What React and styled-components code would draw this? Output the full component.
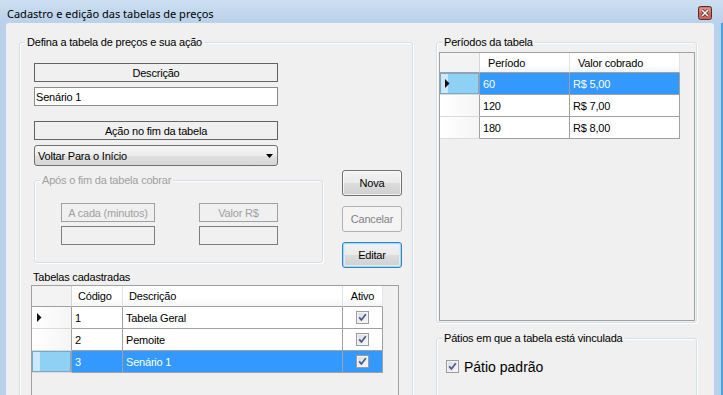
import React from 'react'
import styled, { createGlobalStyle, css } from 'styled-components'

const GlobalStyle = createGlobalStyle`
  html, body {
    margin: 0;
    padding: 0;
    background: #b9d1ea;
  }
  body {
    font-family: 'Liberation Sans', Arial, sans-serif;
    font-size: 11px;
    letter-spacing: -0.2px;
    color: #000;
  }
`

const tabelas = [
  { codigo: '1', descricao: 'Tabela Geral', ativo: true },
  { codigo: '2', descricao: 'Pemoite', ativo: true },
  { codigo: '3', descricao: 'Senário 1', ativo: true },
]

const tabelaCols = [
  { key: 'codigo', label: 'Código', width: 51, headPad: 6 },
  { key: 'descricao', label: 'Descrição', width: 220, headPad: 6 },
  { key: 'ativo', label: 'Ativo', width: 40, center: true, check: true },
]

const periodos = [
  { periodo: '60', valor: 'R$ 5,00' },
  { periodo: '120', valor: 'R$ 7,00' },
  { periodo: '180', valor: 'R$ 8,00' },
]

const periodoCols = [
  { key: 'periodo', label: 'Período', width: 90, headPad: 8 },
  { key: 'valor', label: 'Valor cobrado', width: 110, headPad: 8 },
]

const CheckGlyph = () => (
  <svg width="13" height="13" viewBox="0 0 13 13">
    <defs>
      <linearGradient id="chk" x1="0" y1="0" x2="1" y2="1">
        <stop offset="0" stopColor="#dcdee2" />
        <stop offset="1" stopColor="#f6f6f6" />
      </linearGradient>
    </defs>
    <rect x="0.5" y="0.5" width="12" height="12" fill="#f4f4f4" stroke="#9a9c9f" />
    <rect x="2" y="2" width="9" height="9" fill="url(#chk)" />
    <path d="M3.2 6.4 L5.4 8.9 L9.8 3.2" stroke="#46598f" strokeWidth="1.7" fill="none" />
  </svg>
)

const RowArrow = () => (
  <svg width="5" height="9" viewBox="0 0 5 9">
    <path d="M0 0 L4.5 4.5 L0 9 Z" fill="#111" />
  </svg>
)

const CloseGlyph = () => (
  <svg width="14" height="14" viewBox="0 0 14 14">
    <rect x="0.5" y="0.5" width="13" height="13" rx="2" fill="#c9675c" stroke="#5c2a25" />
    <rect x="1.5" y="1.5" width="11" height="5" rx="1" fill="#dd8d84" />
    <path d="M4 4 L10 10 M10 4 L4 10" stroke="#4a1f1a" strokeWidth="3" />
    <path d="M4 4 L10 10 M10 4 L4 10" stroke="#fff" strokeWidth="1.6" />
  </svg>
)

const DropArrow = () => (
  <svg width="7" height="4" viewBox="0 0 7 4">
    <path d="M0 0 L7 0 L3.5 4 Z" fill="#000" />
  </svg>
)

function DataGrid({ columns, rows, currentRow, selectedRow, headHeight, height }) {
  const template = '40px ' + columns.map(c => c.width + 'px').join(' ')
  return (
    <GridFrame $height={height}>
      <GridRow $cols={template} $h={headHeight}>
        <CornerCell />
        {columns.map(c => (
          <HeadCell key={c.key} $pad={c.headPad} $center={c.center}>
            {c.label}
          </HeadCell>
        ))}
      </GridRow>
      {rows.map((row, i) => (
        <GridRow key={i} $cols={template} $h={22}>
          <RowHead $selected={i === selectedRow}>{i === currentRow && <RowArrow />}</RowHead>
          {columns.map(c => (
            <Cell key={c.key} $selected={i === selectedRow} $center={c.center}>
              {c.check ? <CheckGlyph /> : row[c.key]}
            </Cell>
          ))}
        </GridRow>
      ))}
    </GridFrame>
  )
}

export default function App() {
  return (
    <>
      <GlobalStyle />
      <Window>
        <TitleBar>
          <Title>Cadastro e edição das tabelas de preços</Title>
          <CloseBox>
            <CloseGlyph />
          </CloseBox>
        </TitleBar>
        <Frame>
          <Client>
            <MainGroup>
              <Legend>Defina a tabela de preços e sua ação</Legend>
              <TopRow>
                <FormColumn>
                  <LabelBox $width={244}>Descrição</LabelBox>
                  <TextBox defaultValue="Senário 1" />
                  <LabelBox $width={244} $gap={15}>
                    Ação no fim da tabela
                  </LabelBox>
                  <ComboBox>
                    <span>Voltar Para o Início</span>
                    <DropArrow />
                  </ComboBox>
                  <AfterGroup>
                    <Legend $disabled>Após o fim da tabela cobrar</Legend>
                    <AfterField>
                      <LabelBox $width={94} $disabled>
                        A cada (minutos)
                      </LabelBox>
                      <SmallInput $width={94} disabled />
                    </AfterField>
                    <AfterField>
                      <LabelBox $width={79} $disabled>
                        Valor R$
                      </LabelBox>
                      <SmallInput $width={79} disabled />
                    </AfterField>
                  </AfterGroup>
                </FormColumn>
                <ButtonColumn>
                  <Button>Nova</Button>
                  <Button disabled>Cancelar</Button>
                  <Button $focused>Editar</Button>
                </ButtonColumn>
              </TopRow>
              <SectionLabel>Tabelas cadastradas</SectionLabel>
              <DataGrid
                columns={tabelaCols}
                rows={tabelas}
                currentRow={0}
                selectedRow={2}
                headHeight={21}
                height={130}
              />
            </MainGroup>
            <RightColumn>
              <PeriodGroup>
                <Legend>Períodos da tabela</Legend>
                <DataGrid
                  columns={periodoCols}
                  rows={periodos}
                  currentRow={0}
                  selectedRow={0}
                  headHeight={20}
                />
              </PeriodGroup>
              <YardGroup>
                <Legend>Pátios em que a tabela está vinculada</Legend>
                <CheckRow>
                  <CheckGlyph />
                  <span>Pátio padrão</span>
                </CheckRow>
              </YardGroup>
            </RightColumn>
          </Client>
        </Frame>
      </Window>
    </>
  )
}

const Window = styled.div`
  width: 723px;
  height: 395px;
  overflow: hidden;
  display: flex;
  flex-direction: column;
  background: #b9d1ea;
`

const TitleBar = styled.div`
  flex: none;
  height: 23px;
  box-sizing: border-box;
  display: flex;
  justify-content: space-between;
  padding: 0 11px 0 7px;
  background: linear-gradient(#cddff1, #b9d1ea);
`

const Title = styled.span`
  font-family: 'Segoe UI', 'Noto Sans', 'DejaVu Sans', sans-serif;
  font-size: 11px;
  letter-spacing: 0;
  line-height: 23px;
  padding-top: 2px;
`

const CloseBox = styled.div`
  margin-top: 6px;
  width: 14px;
  height: 14px;
`

const Frame = styled.div`
  flex: 1;
  display: flex;
  padding: 0 7px 0 6px;
  border-right: 2px solid #4aa3dc;
  min-height: 0;
`

const Client = styled.div`
  flex: 1;
  display: flex;
  gap: 23px;
  padding: 19px 0 0 13px;
  background: #f0f0f0;
  border-radius: 3px 3px 0 0;
  overflow: hidden;
`

const GroupBox = styled.div`
  position: relative;
  flex: none;
  box-sizing: border-box;
  border: 1px solid #d5dfe5;
  border-radius: 3px;
  box-shadow: 1px 1px 0 #fff, inset 1px 1px 0 #fff;
`

const Legend = styled.span`
  position: absolute;
  top: -8px;
  left: 5px;
  padding: 0 2px;
  line-height: 14px;
  white-space: nowrap;
  background: #f0f0f0;
  color: ${p => (p.$disabled ? '#a0a0a0' : '#000')};
`

const MainGroup = styled(GroupBox)`
  width: 394px;
  height: 380px;
  padding: 20px 0 0 11px;
`

const TopRow = styled.div`
  display: flex;
  align-items: flex-start;
  height: 200px;
`

const FormColumn = styled.div`
  width: 289px;
  margin-left: 3px;
  display: flex;
  flex-direction: column;
`

const ButtonColumn = styled.div`
  margin-left: 19px;
  padding-top: 107px;
  display: flex;
  flex-direction: column;
  gap: 10px;
`

const LabelBox = styled.div`
  box-sizing: border-box;
  width: ${p => p.$width}px;
  height: 19px;
  margin-top: ${p => p.$gap || 0}px;
  display: flex;
  align-items: center;
  justify-content: center;
  border: 1px solid ${p => (p.$disabled ? '#a0a0a0' : '#646464')};
  color: ${p => (p.$disabled ? '#a0a0a0' : '#000')};
  background: #f0f0f0;
`

const TextBox = styled.input`
  box-sizing: border-box;
  width: 244px;
  height: 19px;
  margin: 5px 0 0;
  padding: 0 1px;
  font: inherit;
  letter-spacing: inherit;
  color: #000;
  border: 1px solid #8a8c90;
  background: #fff;
  outline: none;
`

const SmallInput = styled.input`
  box-sizing: border-box;
  width: ${p => p.$width}px;
  height: 19px;
  margin: 4px 0 0;
  padding: 0;
  border: 1px solid #7d7d7d;
  background: #f0f0f0;
`

const ComboBox = styled.div`
  box-sizing: border-box;
  width: 244px;
  height: 21px;
  margin-top: 5px;
  display: flex;
  align-items: center;
  justify-content: space-between;
  padding: 0 4px 0 3px;
  border: 1px solid #707070;
  border-radius: 3px;
  background: linear-gradient(#f6f6f6 0%, #ececec 50%, #e1e1e1 50%, #d6d6d6 100%);
`

const AfterGroup = styled(GroupBox)`
  width: 289px;
  height: 83px;
  margin-top: 14px;
  display: flex;
  gap: 44px;
  padding: 22px 0 0 26px;
`

const AfterField = styled.div`
  display: flex;
  flex-direction: column;
`

const Button = styled.button`
  box-sizing: border-box;
  width: 60px;
  height: 26px;
  padding: 0;
  font: inherit;
  letter-spacing: inherit;
  color: #000;
  border: 1px solid #707070;
  border-radius: 3px;
  background: linear-gradient(#f2f2f2 0%, #ebebeb 50%, #dddddd 50%, #cfcfcf 100%);
  box-shadow: inset 0 0 0 1px rgba(255, 255, 255, 0.75);

  ${p =>
    p.$focused &&
    css`
      border-color: #3c7fb1;
      box-shadow: inset 0 0 0 1px #9fdcf8, inset 0 0 0 2px #d6effb;
    `}

  &:disabled {
    border-color: #adb2b5;
    background: #f4f4f4;
    color: #838383;
    box-shadow: none;
  }
`

const SectionLabel = styled.div`
  margin-top: 7px;
  padding-left: 2px;
  line-height: 15px;
`

const GridFrame = styled.div`
  box-sizing: border-box;
  border: 1px solid #a0a0a0;
  background: #f0f0f0;
  ${p => (p.$height ? `height: ${p.$height}px; width: 368px;` : 'flex: 1;')}
`

const GridRow = styled.div`
  display: grid;
  grid-template-columns: ${p => p.$cols};
  height: ${p => p.$h}px;
`

const CornerCell = styled.div`
  background: #f3f3f3;
  border-right: 1px solid #d5d5d5;
  border-bottom: 1px solid #a0a0a0;
`

const HeadCell = styled.div`
  box-sizing: border-box;
  display: flex;
  align-items: center;
  justify-content: ${p => (p.$center ? 'center' : 'flex-start')};
  padding-left: ${p => p.$pad || 0}px;
  background: linear-gradient(#ffffff 0%, #ffffff 60%, #f4f5f7 100%);
  border-right: 1px solid #e2e3e5;
  border-bottom: 1px solid #a0a0a0;
  white-space: nowrap;
`

const RowHead = styled.div`
  box-sizing: border-box;
  display: flex;
  align-items: center;
  padding-left: 5px;
  border-right: 1px solid #a0a0a0;
  border-bottom: 1px solid #dadada;
  background: linear-gradient(to right, #ffffff, #f5f5f5);

  ${p =>
    p.$selected &&
    css`
      background: linear-gradient(to right, #cbe9fb 0, #cbe9fb 8px, #8fd0f5 8px, #8fd0f5 100%);
      box-shadow: inset 0 0 0 1px #79a9c8;
    `}
`

const Cell = styled.div`
  box-sizing: border-box;
  display: flex;
  align-items: center;
  justify-content: ${p => (p.$center ? 'center' : 'flex-start')};
  padding-left: ${p => (p.$center ? 0 : 3)}px;
  border-right: 1px solid #a0a0a0;
  border-bottom: 1px solid #a0a0a0;
  white-space: nowrap;
  background: ${p => (p.$selected ? '#3399ff' : '#fff')};
  color: ${p => (p.$selected ? '#fff' : '#000')};
`

const RightColumn = styled.div`
  flex: none;
  width: 261px;
  display: flex;
  flex-direction: column;
`

const PeriodGroup = styled(GroupBox)`
  height: 281px;
  display: flex;
  flex-direction: column;
  padding: 9px 1px 1px 2px;
`

const YardGroup = styled(GroupBox)`
  height: 80px;
  margin-top: 15px;
  padding: 19px 0 0 9px;
`

const CheckRow = styled.div`
  display: flex;
  align-items: center;
  gap: 5px;
  height: 17px;
  font-size: 14px;
  letter-spacing: 0;
`
